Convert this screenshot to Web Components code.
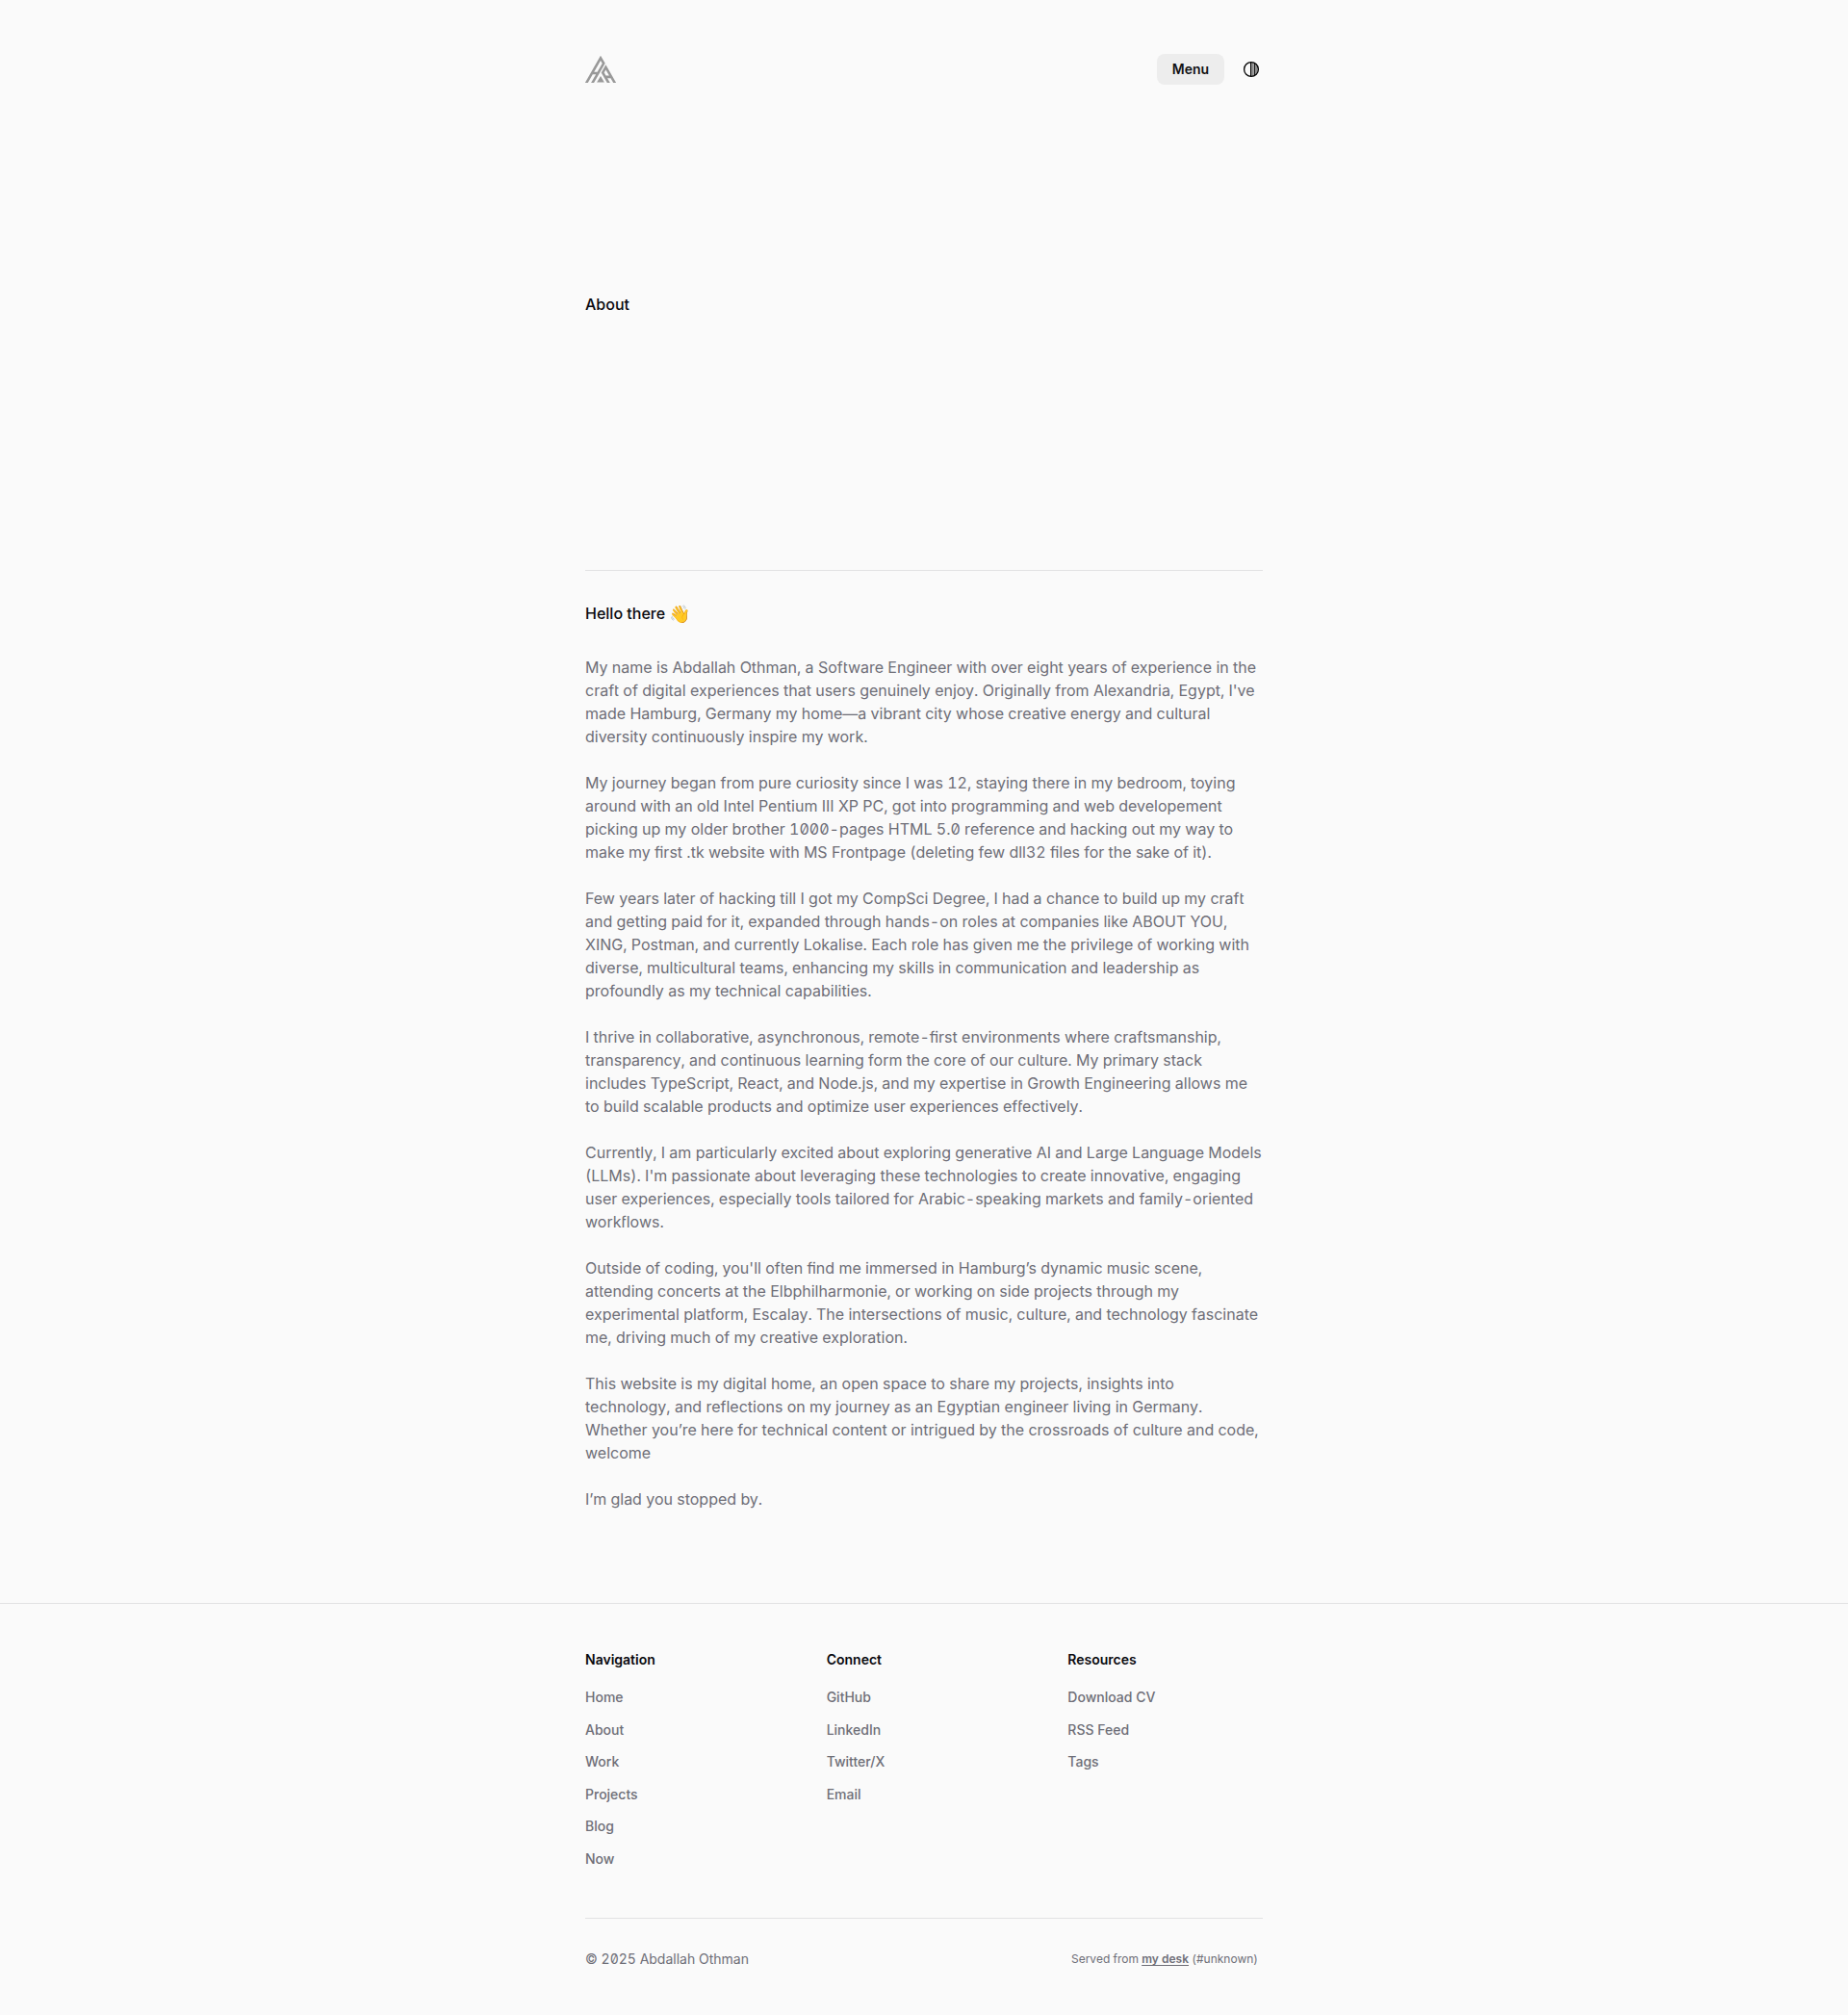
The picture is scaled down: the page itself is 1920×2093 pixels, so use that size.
<!DOCTYPE html>
<html lang="en"><head><meta charset="utf-8"><title>About</title>
<style>
body{margin:0;background:#fafafa;color:#6e6e77;font-family:Inter,"Liberation Sans",sans-serif;font-size:16px;line-height:24px}
</style></head><body>
<about-page></about-page>
<script>
const define=(name,html)=>customElements.define(name,class extends HTMLElement{
  constructor(){super();this.attachShadow({mode:'open'}).innerHTML=html;}
});
define('site-logo',`<style>:host{display:block;width:32px;height:32px}.clip{display:block;height:29.5px;overflow:hidden}svg{display:block}</style>
<span class="clip"><svg width="32" height="32" viewBox="0 0 32 32" fill="none" stroke="#999" stroke-width="2.6">
<path d="M.6 31.2 16 4.3 19.2 9.8 6.9 31.2M7.4 20H13.2M31.4 31.2 21.4 13.9 18.2 19.4 25 31.2M20.6 23.9H27"/>
<path d="M16 23 19.9 29.5H12.1Z" fill="#999" stroke="none"/></svg></span>`);
define('theme-toggle',`<style>:host{display:block;width:18px;height:18px}svg{display:block}</style>
<svg width="18" height="18" viewBox="0 0 18 18" fill="none"><path d="M9 2H11.6V16H9ZM13 3.2 15.6 6V12L13 14.8Z" fill="#8e8e8e"/><path d="M8.5 1.7V16.3M12.4 2.6V15.4" stroke="#000"/><circle cx="9" cy="9" r="7.4" stroke="#000" stroke-width="1.3"/></svg>`);
define('site-header',`<style>:host{display:flex;justify-content:space-between;align-items:center;height:32px;padding-top:56px}
.r{display:flex;align-items:center;gap:19px;padding-right:3px}
button{all:unset;box-sizing:border-box;width:70px;height:32px;border-radius:8px;background:#ededed;color:#111113;font-size:14px;font-weight:600;text-align:center;line-height:32px}</style>
<site-logo></site-logo><div class="r"><button>Menu</button><theme-toggle></theme-toggle></div>`);
const paras=[
["My name is Abdallah Othman, a Software Engineer with over eight years of experience in the","craft of digital experiences that users genuinely enjoy. Originally from Alexandria, Egypt, I've","made Hamburg, Germany my home—a vibrant city whose creative energy and cultural","diversity continuously inspire my work."],
["My journey began from pure curiosity since I was 12, staying there in my bedroom, toying","around with an old Intel Pentium III XP PC, got into programming and web developement","picking up my older brother 1000-pages HTML 5.0 reference and hacking out my way to","make my first .tk website with MS Frontpage (deleting few dll32 files for the sake of it)."],
["Few years later of hacking till I got my CompSci Degree, I had a chance to build up my craft","and getting paid for it, expanded through hands-on roles at companies like ABOUT YOU,","XING, Postman, and currently Lokalise. Each role has given me the privilege of working with","diverse, multicultural teams, enhancing my skills in communication and leadership as","profoundly as my technical capabilities."],
["I thrive in collaborative, asynchronous, remote-first environments where craftsmanship,","transparency, and continuous learning form the core of our culture. My primary stack","includes TypeScript, React, and Node.js, and my expertise in Growth Engineering allows me","to build scalable products and optimize user experiences effectively."],
["Currently, I am particularly excited about exploring generative AI and Large Language Models","(LLMs). I'm passionate about leveraging these technologies to create innovative, engaging","user experiences, especially tools tailored for Arabic-speaking markets and family-oriented","workflows."],
["Outside of coding, you'll often find me immersed in Hamburg’s dynamic music scene,","attending concerts at the Elbphilharmonie, or working on side projects through my","experimental platform, Escalay. The intersections of music, culture, and technology fascinate","me, driving much of my creative exploration."],
["This website is my digital home, an open space to share my projects, insights into","technology, and reflections on my journey as an Egyptian engineer living in Germany.","Whether you’re here for technical content or intrigued by the crossroads of culture and code,","welcome"],
["I’m glad you stopped by."]];
define('about-article',`<style>:host{display:block;border-top:1px solid #e2e2e3;padding-top:32px;font-feature-settings:"zero","tnum","dlig"}
h2{margin:0 0 32px;height:24px;font-size:16px;line-height:24px;font-weight:500;color:#09090e;white-space:nowrap}h2 span{font-size:18px;line-height:0;vertical-align:-1px}p{margin:0 0 24px;white-space:nowrap}</style>
<h2>Hello there <span>👋</span></h2>${paras.map(p=>`<p>${p.join('<br>')}</p>`).join('')}`);
define('link-column',`<style>:host{display:block;font-size:14px;font-weight:500}h3{margin:0 0 12px;font-size:14px;line-height:20px;font-weight:600;color:#09090e}
nav{display:flex;flex-direction:column}::slotted(a){height:33.5px;line-height:33.5px;color:#6e6e77}</style><h3><slot name="title"></slot></h3><nav><slot></slot></nav>`);
const column=(t,l)=>`<link-column><span slot="title">${t}</span>${l.map(x=>`<a>${x}</a>`).join('')}</link-column>`;
define('site-footer',`<style>:host{display:block;border-top:1px solid #e2e2e3}
.wrap{width:704px;margin:0 auto;padding-top:48px}.cols{display:grid;grid-template-columns:repeat(3,1fr);gap:48px;height:278px}
.bottom{border-top:1px solid #e2e2e3;height:84px;display:flex;justify-content:space-between;align-items:center;font-size:14px;font-feature-settings:"zero","tnum","dlig"}
.small{font-size:12px;padding-right:5px}.small a{font-weight:600;text-decoration:underline;text-underline-offset:2px}</style>
<div class="wrap"><div class="cols">${column('Navigation',['Home','About','Work','Projects','Blog','Now'])}${column('Connect',['GitHub','LinkedIn','Twitter/X','Email'])}${column('Resources',['Download CV','RSS Feed','Tags'])}</div>
<div class="bottom"><span>© 2025 Abdallah Othman</span><span class="small">Served from <a>my desk</a> (#unknown)</span></div></div>`);
define('about-page',`<style>:host{display:flex;flex-direction:column;height:2093px}main{width:704px;margin:0 auto;height:1665px;flex:none}
h1{margin:216px 0 264px;font-size:16px;line-height:24px;font-weight:500;color:#09090e}</style>
<main><site-header></site-header><h1>About</h1><about-article></about-article></main><site-footer></site-footer>`);
</script></body></html>
